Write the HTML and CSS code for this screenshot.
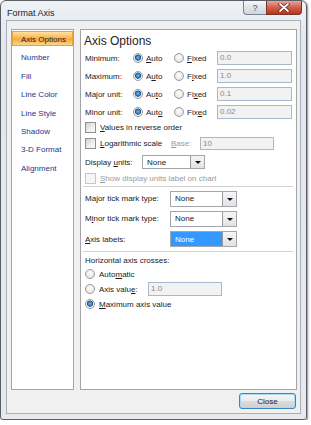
FILE: index.html
```html
<!DOCTYPE html>
<html lang="en">
<head>
  <meta charset="UTF-8" />
  <title>Format Axis</title>
  <link rel="stylesheet" href="styles.css">
</head>
<body>
  <div class="window">
    <!-- 제목 표시줄 -->
    <div class="titlebar">
      <span class="title">Format Axis</span>
      <div class="caption">
        <span class="cap-help">?</span>
        <span class="cap-close">
          <svg width="12" height="9" viewBox="0 0 12 9">
            <path d="M2 1 L10 8 M10 1 L2 8" stroke="#5a1c12" stroke-width="3.2" stroke-linecap="round"/>
            <path d="M2 1 L10 8 M10 1 L2 8" stroke="#fff" stroke-width="1.8" stroke-linecap="round"/>
          </svg>
        </span>
      </div>
    </div>

    <div class="client">
      <div class="panes">
        <!-- 왼쪽 목록 -->
        <ul class="nav">
          <li class="active">Axis Options</li>
          <li>Number</li>
          <li>Fill</li>
          <li>Line Color</li>
          <li>Line Style</li>
          <li>Shadow</li>
          <li>3-D Format</li>
          <li>Alignment</li>
        </ul>

        <!-- 옵션 영역 -->
        <div class="content">
          <h2>Axis Options</h2>

          <div class="axis-row">
            <span>Minimum:</span>
            <span class="opt"><i class="radio on"></i><u>A</u>uto</span>
            <span class="opt"><i class="radio"></i><u>F</u>ixed</span>
            <span class="field">0.0</span>
          </div>
          <div class="axis-row">
            <span>Maximum:</span>
            <span class="opt"><i class="radio on"></i>A<u>u</u>to</span>
            <span class="opt"><i class="radio"></i>F<u>i</u>xed</span>
            <span class="field">1.0</span>
          </div>
          <div class="axis-row">
            <span>Major unit:</span>
            <span class="opt"><i class="radio on"></i>Au<u>t</u>o</span>
            <span class="opt"><i class="radio"></i>Fi<u>x</u>ed</span>
            <span class="field">0.1</span>
          </div>
          <div class="axis-row">
            <span>Minor unit:</span>
            <span class="opt"><i class="radio on"></i>Aut<u>o</u></span>
            <span class="opt"><i class="radio"></i>Fix<u>e</u>d</span>
            <span class="field">0.02</span>
          </div>

          <div class="row row-values">
            <i class="check"></i><span><u>V</u>alues in reverse order</span>
          </div>
          <div class="row row-log">
            <i class="check"></i><span class="log-label"><u>L</u>ogarithmic scale</span>
            <span class="base-label"><u>B</u>ase:</span>
            <span class="field base-field">10</span>
          </div>
          <div class="row row-units">
            <span class="units-label">Display <u>u</u>nits:</span>
            <span class="combo units-combo"><span class="combo-text">None</span><span class="combo-btn"></span></span>
          </div>
          <div class="row row-show">
            <i class="check off"></i><span class="muted"><u>S</u>how display units label on chart</span>
          </div>

          <div class="sep"></div>

          <div class="row row-major">
            <span class="tick-label">Ma<u>j</u>or tick mark type:</span>
            <span class="combo"><span class="combo-text">None</span><span class="combo-btn"></span></span>
          </div>
          <div class="row row-minor">
            <span class="tick-label">M<u>i</u>nor tick mark type:</span>
            <span class="combo"><span class="combo-text">None</span><span class="combo-btn"></span></span>
          </div>
          <div class="row row-labels">
            <span class="tick-label"><u>A</u>xis labels:</span>
            <span class="combo selected"><span class="combo-text">None</span><span class="combo-btn"></span></span>
          </div>

          <div class="sep sep-low"></div>

          <div class="row row-cross">Horizontal axis crosses:</div>
          <div class="row row-auto">
            <i class="radio"></i><span>Auto<u>m</u>atic</span>
          </div>
          <div class="row row-value">
            <i class="radio"></i><span class="value-label">Axis valu<u>e</u>:</span>
            <span class="field value-field">1.0</span>
          </div>
          <div class="row row-max">
            <i class="radio on"></i><span><u>M</u>aximum axis value</span>
          </div>
        </div>
      </div>

      <div class="footer">
        <button class="close-btn">Close</button>
      </div>
    </div>
  </div>
</body>
</html>
```

FILE: styles.css
```css
/* 창 전체 */
body {
  margin: 0;
  background: #fff;
  font-family: 'Liberation Sans', Arial, sans-serif;
  font-size: 8px;
  color: #1a1a1a;
}
.window {
  box-sizing: border-box;
  width: 307px;
  height: 420px;
  border: 1px solid #5a5f66;
  border-radius: 6px 6px 3px 3px;
  background: linear-gradient(#eef2f6, #e3e8ee 40px, #e6eaef);
  padding: 0 5px 5px 5px;
  box-shadow: 1px 1px 2px rgba(0, 0, 0, 0.45);
}
.titlebar {
  height: 19px;
  display: flex;
  align-items: flex-start;
}
.title {
  font-size: 9px;
  margin-top: 7px;
  margin-left: 1px;
  color: #1c1c1c;
}
.caption {
  margin-left: auto;
  margin-right: -1px;
  display: flex;
}
.cap-help, .cap-close {
  box-sizing: border-box;
  height: 14px;
  display: flex;
  align-items: center;
  justify-content: center;
  border: 1px solid #7b838e;
  border-top: none;
}
.cap-help {
  width: 23px;
  border-radius: 0 0 0 4px;
  border-right: none;
  background: linear-gradient(#f5f7fa, #dfe4ea 50%, #cfd6de);
  color: #4a5563;
  font-size: 9px;
}
.cap-close {
  width: 36px;
  border-radius: 0 0 4px 0;
  border-color: #7a3326;
  background: linear-gradient(#e9a597, #d0604a 50%, #b8321c);
}

/* 클라이언트 영역 */
.client {
  box-sizing: border-box;
  height: 394px;
  border: 1px solid #a9b0b9;
  background: #f0f0f0;
  padding: 8px 3px 0 4px;
}
.panes {
  display: flex;
  gap: 6px;
  height: 361px;
}
.nav {
  box-sizing: border-box;
  width: 63px;
  margin: 0;
  padding: 1px 0 0 0;
  list-style: none;
  background: #fff;
  border: 1px solid #a5a5a5;
}
.nav li {
  box-sizing: border-box;
  height: 15px;
  margin-bottom: 3.4px;
  padding-left: 8px;
  line-height: 15px;
  color: #25368c;
  border: 1px solid transparent;
}
.nav li.active {
  color: #1b1b3a;
  border-color: #e6a13e;
  background: linear-gradient(#fde2a0, #fbb652 45%, #f9a93a 55%, #fcd58a);
}
.content {
  box-sizing: border-box;
  width: 217px;
  background: #fff;
  border: 1px solid #a5a5a5;
  padding: 0 3px 0 4px;
}
h2 {
  margin: 3px 0 0 -1px;
  height: 16px;
  line-height: 16px;
  font-size: 12px;
  font-weight: normal;
  color: #1e1e1e;
}

/* 행 */
.axis-row {
  display: grid;
  grid-template-columns: 48px 41px 43px 75px;
  align-items: center;
  height: 18px;
}
.opt {
  display: flex;
  align-items: center;
}
.row {
  display: flex;
  align-items: center;
}
.row-values { height: 13px; }
.row-log { height: 18px; }
.row-units { height: 20px; }
.row-show { height: 12px; }
.row-major { height: 19px; }
.row-minor { height: 21px; }
.row-labels { height: 20px; }
.row-cross { height: 14px; }
.row-auto { height: 14px; }
.row-value { height: 16px; }
.row-max { height: 14px; }

.radio {
  box-sizing: border-box;
  width: 10px;
  height: 10px;
  border-radius: 50%;
  border: 1px solid #9b9b9b;
  background: radial-gradient(circle at 50% 40%, #fdfdfd, #dedede);
  margin-right: 3px;
  flex: none;
}
.radio.on {
  background: radial-gradient(circle at 50% 45%, #6cc0f2 0, #2a74b8 2.2px, #1d4f86 2.8px, #ececec 3.4px, #f8f8f8 5px);
}
.row .radio {
  margin-right: 4px;
}
.check {
  box-sizing: border-box;
  width: 11px;
  height: 11px;
  border: 1px solid #909090;
  background: linear-gradient(135deg, #d2d2d2, #f0f0f0 60%, #fafafa);
  margin-right: 4px;
  flex: none;
}
.check.off {
  border-color: #c6c6c6;
  background: #f6f6f6;
}
.muted, .base-label {
  color: #9a9a9a;
}
.field {
  box-sizing: border-box;
  height: 14px;
  line-height: 12px;
  border: 1px solid #a9b9cd;
  background: #f2f2f2;
  color: #8a8a8a;
  padding-left: 2px;
}
.log-label { width: 71px; }
.base-label { width: 29px; }
.base-field { width: 74px; height: 13px; line-height: 11px; }
.units-label { width: 57px; }
.tick-label { width: 85px; }
.value-label { width: 49px; }
.value-field { width: 74px; }

/* 콤보 상자 */
.combo {
  box-sizing: border-box;
  display: flex;
  width: 67px;
  height: 16px;
  border: 1px solid #a2a7ae;
  background: #fff;
}
.units-combo {
  width: 63px;
  height: 14px;
}
.combo-text {
  flex: 1;
  padding-left: 4px;
  display: flex;
  align-items: center;
}
.combo.selected .combo-text {
  background: #3399ff;
  color: #fff;
}
.combo-btn {
  box-sizing: border-box;
  width: 14px;
  border-left: 1px solid #9a9a9a;
  background: linear-gradient(#f6f6f6, #e2e2e2);
  position: relative;
}
.combo-btn::after {
  content: "";
  position: absolute;
  left: 4px;
  top: 50%;
  margin-top: -1px;
  border-left: 3px solid transparent;
  border-right: 3px solid transparent;
  border-top: 3px solid #111;
}
.sep {
  height: 1px;
  margin: 2px 0 2px -2px;
  background: #d2d2d2;
}
.sep-low {
  margin: 2px 0 1px -2px;
}

/* 닫기 버튼 */
.footer {
  display: flex;
  justify-content: flex-end;
  padding: 3px 1px 0 0;
}
.close-btn {
  box-sizing: border-box;
  width: 57px;
  height: 16px;
  padding: 0;
  font-family: 'Liberation Sans', Arial, sans-serif;
  font-size: 8px;
  color: #1a1a1a;
  border: 1px solid #3d84bf;
  border-radius: 3px;
  background: linear-gradient(#f4f4f4, #ececec 50%, #dcdcdc 51%, #cfcfcf);
  box-shadow: inset 0 0 0 1px #a6dcf5;
}
```
